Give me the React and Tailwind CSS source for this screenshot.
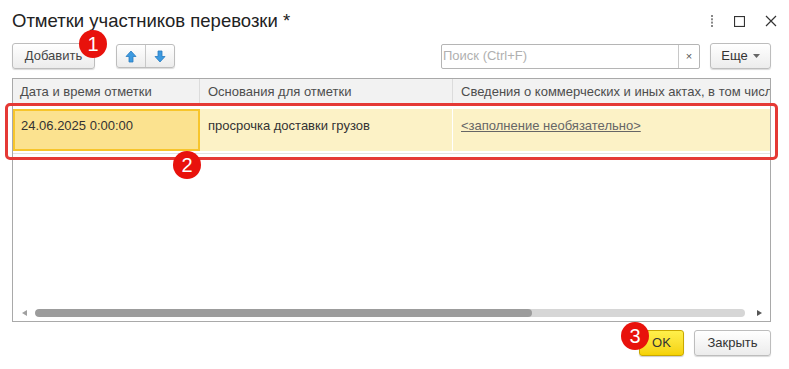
import React from 'react';

const font = { fontFamily: '"Liberation Sans", Arial, sans-serif' };

function Badge({ n, className }) {
  return (
    <div
      className={
        'absolute w-[28px] h-[28px] rounded-full bg-[#e8120c] text-white text-[20px] flex items-center justify-center ' +
        className
      }
    >
      {n}
    </div>
  );
}

function ArrowUp() {
  return (
    <svg width="12" height="13" viewBox="0 0 12 13">
      <path d="M6 1 L11 6.5 H8 V12 H4 V6.5 H1 Z" fill="#3d9ae0" stroke="#2a7cc0" strokeWidth="0.8" />
    </svg>
  );
}

function ArrowDown() {
  return (
    <svg width="12" height="13" viewBox="0 0 12 13">
      <path d="M6 12 L11 6.5 H8 V1 H4 V6.5 H1 Z" fill="#3d9ae0" stroke="#2a7cc0" strokeWidth="0.8" />
    </svg>
  );
}

export default function App() {
  return (
    <div className="relative w-[789px] h-[369px] bg-white overflow-hidden text-[#333]" style={font}>
      {/* Title */}
      <div className="flex items-center justify-between pl-[12px] pr-[12px] pt-[9px] h-[33px]">
        <div className="text-[18.5px] leading-[24px] text-[#222]">Отметки участников перевозки *</div>
        <div className="flex items-center gap-[20px] text-[#444]">
          <svg width="4" height="12" viewBox="0 0 4 12">
            <rect x="1" y="0" width="2" height="2" fill="#888" />
            <rect x="1" y="3.3" width="2" height="2" fill="#888" />
            <rect x="1" y="6.6" width="2" height="2" fill="#888" />
            <rect x="1" y="10" width="2" height="2" fill="#888" />
          </svg>
          <svg width="11" height="11" viewBox="0 0 11 11">
            <rect x="0.5" y="0.5" width="10" height="10" fill="none" stroke="#333" strokeWidth="1.2" />
          </svg>
          <svg width="12" height="12" viewBox="0 0 12 12">
            <path d="M1 1 L11 11 M11 1 L1 11" stroke="#333" strokeWidth="1.2" />
          </svg>
        </div>
      </div>

      {/* Toolbar */}
      <div className="flex items-center mt-[10px] pl-[12px] pr-[18px] h-[26px]">
        <button className="h-[26px] w-[83px] border border-[#bdbdbd] rounded-[3px] bg-gradient-to-b from-white to-[#ececec] text-[13px] text-[#444] shadow-[0_1px_1px_rgba(0,0,0,0.15)]">
          Добавить
        </button>
        <div className="flex ml-[21px] h-[24px] border border-[#bdbdbd] rounded-[3px] bg-gradient-to-b from-white to-[#ececec] shadow-[0_1px_1px_rgba(0,0,0,0.15)]">
          <div className="w-[29px] flex items-center justify-center border-r border-[#c8c8c8]">
            <ArrowUp />
          </div>
          <div className="w-[28px] flex items-center justify-center">
            <ArrowDown />
          </div>
        </div>
        <div className="ml-auto flex h-[25px] w-[259px] border border-[#b5b5b5] rounded-[2px]">
          <div className="flex-1 flex items-center pl-[1px] text-[13px] text-[#b0b0b0]">Поиск (Ctrl+F)</div>
          <div className="w-[21px] flex items-center justify-center border-l border-[#c8c8c8] text-[11px] text-[#555]">×</div>
        </div>
        <button className="ml-[10px] h-[26px] w-[61px] border border-[#bdbdbd] rounded-[3px] bg-gradient-to-b from-white to-[#ececec] text-[13px] text-[#333] shadow-[0_1px_1px_rgba(0,0,0,0.15)] flex items-center justify-center gap-[5px]">
          Еще
          <svg width="7" height="4" viewBox="0 0 7 4">
            <path d="M0 0 H7 L3.5 4 Z" fill="#666" />
          </svg>
        </button>
      </div>

      {/* Table */}
      <div className="mt-[9px] ml-[12px] w-[759px] h-[244px] border border-[#a9a9a9] flex flex-col">
        <div className="flex h-[27px] bg-[#f2f2f2] border-b border-[#dcdcdc] text-[13px] text-[#4d4d4d]">
          <div className="w-[187px] pl-[7px] flex items-center border-r border-[#dcdcdc]">Дата и время отметки</div>
          <div className="w-[253px] pl-[8px] flex items-center border-r border-[#dcdcdc]">Основания для отметки</div>
          <div className="flex-1 pl-[8px] flex items-center whitespace-nowrap overflow-hidden">
            Сведения о коммерческих и иных актах, в том числе
          </div>
        </div>
        <div className="flex h-[48px] pt-[3px] pb-[2px] bg-white border-b border-[#e3e3e3] text-[13px] text-[#333]">
          <div className="w-[187px] bg-[#fbe28f] border-2 border-[#f7c52b] pl-[6px] pt-[5px]">24.06.2025 0:00:00</div>
          <div className="w-[253px] bg-[#fcf2c6] border-r border-white pl-[8px] pt-[7px]">просрочка доставки грузов</div>
          <div className="flex-1 bg-[#fcf2c6] pl-[8px] pt-[7px]">
            <span className="text-[#666] underline">&lt;заполнение необязательно&gt;</span>
          </div>
        </div>
        <div className="flex-1" />
        {/* Scrollbar */}
        <div className="flex items-center h-[16px] pb-[1px] pl-[9px] pr-[8px] gap-[8px]">
          <svg width="5" height="6" viewBox="0 0 5 6">
            <path d="M5 0 V6 L0 3 Z" fill="#a0a0a0" />
          </svg>
          <div className="flex-1 flex h-[8px] rounded-full bg-[#d6d6d6] overflow-hidden">
            <div className="w-[497px] h-full rounded-full bg-[#9c9c9c]" />
          </div>
          <svg width="5" height="6" viewBox="0 0 5 6" className="ml-[4px]">
            <path d="M0 0 V6 L5 3 Z" fill="#555" />
          </svg>
        </div>
      </div>

      {/* Footer */}
      <div className="flex justify-end gap-[10px] mt-[8px] pr-[18px]">
        <button className="h-[26px] w-[45px] border border-[#c9a800] rounded-[3px] bg-gradient-to-b from-[#fff04a] to-[#f5d200] text-[13px] text-[#333] shadow-[0_1px_1px_rgba(0,0,0,0.2)]">
          OK
        </button>
        <button className="h-[26px] w-[77px] border border-[#bdbdbd] rounded-[3px] bg-gradient-to-b from-white to-[#ececec] text-[13px] text-[#333] shadow-[0_1px_1px_rgba(0,0,0,0.15)]">
          Закрыть
        </button>
      </div>

      {/* Annotations */}
      <div className="absolute left-[5px] top-[103px] w-[773px] h-[57px] border-[3px] border-[#e53935] rounded-[5px]" />
      <Badge n="1" className="left-[79px] top-[30px]" />
      <Badge n="2" className="left-[173px] top-[151px]" />
      <Badge n="3" className="left-[621px] top-[322px]" />
    </div>
  );
}
